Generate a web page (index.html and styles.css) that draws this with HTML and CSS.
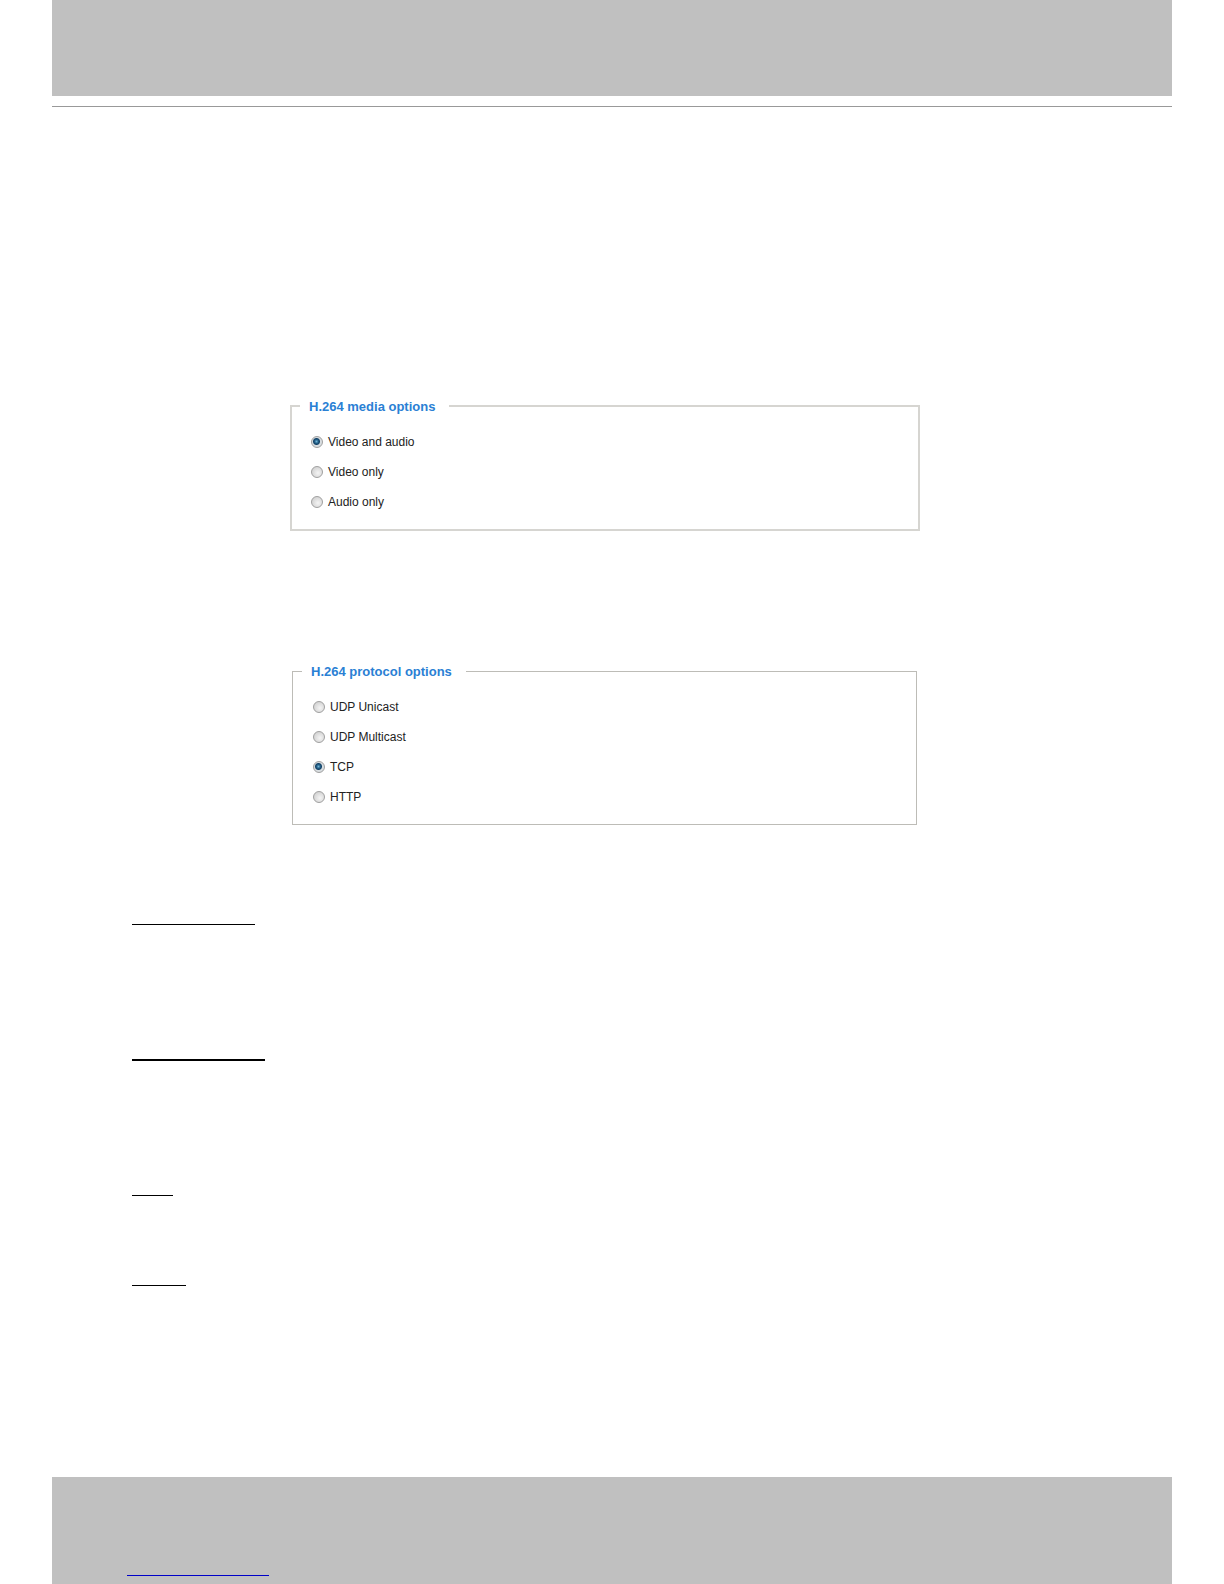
FILE: index.html
```
<!DOCTYPE html>
<html lang="en">
<head>
    <meta charset="UTF-8">
    <meta name="viewport" content="width=device-width, initial-scale=1.0">
    <title>H.264 options</title>
    <link rel="stylesheet" href="styles.css">
</head>
<body>
    <div class="page">
        <header class="page-header"></header>

        <main class="content">
            <form class="options">
                <fieldset class="media">
                    <legend>H.264 media options</legend>
                    <div class="option">
                        <input type="radio" id="video-audio" name="media" checked>
                        <label for="video-audio">Video and audio</label>
                    </div>
                    <div class="option">
                        <input type="radio" id="video-only" name="media">
                        <label for="video-only">Video only</label>
                    </div>
                    <div class="option">
                        <input type="radio" id="audio-only" name="media">
                        <label for="audio-only">Audio only</label>
                    </div>
                </fieldset>

                <fieldset class="protocol">
                    <legend>H.264 protocol options</legend>
                    <div class="option">
                        <input type="radio" id="udp-unicast" name="protocol">
                        <label for="udp-unicast">UDP Unicast</label>
                    </div>
                    <div class="option">
                        <input type="radio" id="udp-multicast" name="protocol">
                        <label for="udp-multicast">UDP Multicast</label>
                    </div>
                    <div class="option">
                        <input type="radio" id="tcp" name="protocol" checked>
                        <label for="tcp">TCP</label>
                    </div>
                    <div class="option">
                        <input type="radio" id="http" name="protocol">
                        <label for="http">HTTP</label>
                    </div>
                </fieldset>
            </form>

            <!-- Section rules -->
            <div class="rules">
                <hr class="rule rule-unicast">
                <hr class="rule rule-multicast">
                <hr class="rule rule-tcp">
                <hr class="rule rule-http">
            </div>
        </main>

        <footer class="page-footer">
            <hr class="rule rule-link">
        </footer>
    </div>
</body>
</html>
```
FILE: styles.css
```
* {
    box-sizing: border-box;
}
body {
    margin: 0;
    background: #fff;
    color: #222;
    font-family: "Liberation Sans", Arial, sans-serif;
    font-size: 12px;
}
.page {
    display: flex;
    flex-direction: column;
    min-height: 100vh;
    margin: 0 52px;
}
.page-header {
    height: 96px;
    background: #c0c0c0;
}
.content {
    flex: 1;
    margin-top: 10px;
    border-top: 1px solid #999;
}
.options {
    padding: 290px 252px 0 238px;
}
fieldset {
    min-width: 0;
    margin: 0;
    padding: 12px 10px 12px 8px;
    border: 2px solid #d6d5d1;
}
legend {
    padding: 2px 14px 0 9px;
    color: #2a80d4;
    font-size: 13px;
    font-weight: bold;
    line-height: 16px;
}
.protocol {
    margin: 131px 3px 0 2px;
    padding-left: 9px;
    border: 1px solid #bdbcb7;
}
.option {
    display: flex;
    align-items: center;
    gap: 5px;
    height: 30px;
    padding-left: 11px;
}
input[type="radio"] {
    appearance: none;
    width: 12px;
    height: 12px;
    margin: 0;
    border: 1px solid #a0a0a0;
    border-radius: 50%;
    background: radial-gradient(circle at 60% 60%, #f4f4f4, #c8c8c8);
}
input[type="radio"]:checked {
    background: radial-gradient(circle at 45% 45%, #6fb4d6 0, #1f5a82 2px, #164468 3px, #d8dde0 4px);
}
.rules {
    padding: 99px 0 0 80px;
}
.rule {
    height: 1px;
    margin: 0;
    border: 0;
    background: #000;
}
.rule-unicast {
    width: 123px;
}
.rule-multicast {
    width: 133px;
    height: 2px;
    margin-top: 134px;
}
.rule-tcp {
    width: 41px;
    margin-top: 134px;
}
.rule-http {
    width: 54px;
    margin-top: 89px;
}
.page-footer {
    height: 107px;
    padding: 98px 0 0 75px;
    background: #c0c0c0;
}
.rule-link {
    width: 142px;
    background: #0000c8;
}
```
